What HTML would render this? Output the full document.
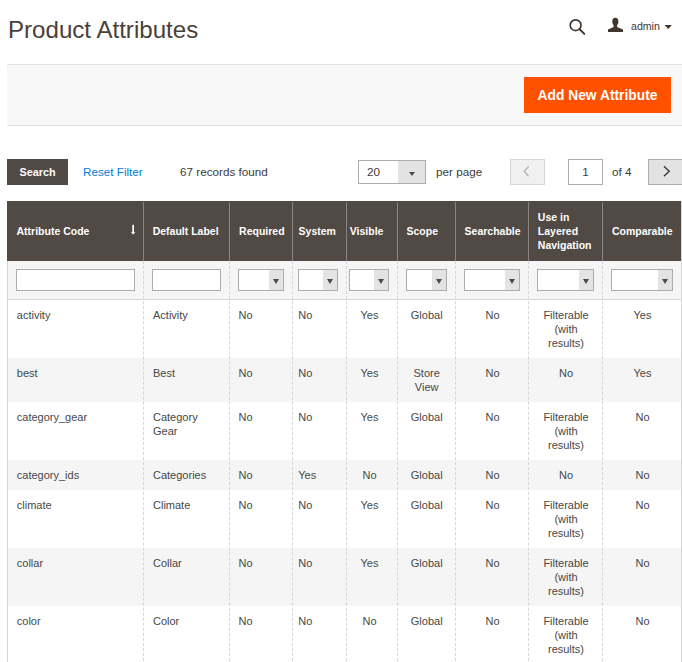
<!DOCTYPE html><html><head><meta charset="utf-8"><style>
*{margin:0;padding:0;box-sizing:border-box}
html,body{width:682px;height:662px;overflow:hidden;background:#fff}
body{font-family:"Liberation Sans",sans-serif;color:#3c3c3c;position:relative}
.a{position:absolute}
.title{left:8px;top:14px;font-size:24.1px;color:#4a403a;line-height:32px;white-space:nowrap}
.pa{left:7px;top:64px;width:675px;height:62px;background:#f8f8f8;border-top:1px solid #e3e3e3;border-bottom:1px solid #e3e3e3}
.btn-add{left:524px;top:77px;width:147px;height:36px;background:#ff5100;color:#fff;font-weight:bold;font-size:13.8px;line-height:37px;text-align:center}
.btn-search{left:7px;top:159px;width:61px;height:26px;background:#514943;color:#fff;font-weight:bold;font-size:10.8px;line-height:26px;text-align:center}
.reset{left:83px;top:164px;font-size:11.7px;color:#007bdb;line-height:16px}
.found{left:180px;top:164px;font-size:11.7px;color:#3c3c3c;line-height:16px}
.sel{left:358px;top:160px;width:68px;height:24px;border:1px solid #adadad;background:#fff}
.sel .arr{position:absolute;right:0;top:0;width:27px;height:22px;background:#e3e3e3}
.tri{position:absolute;width:0;height:0;border-left:4px solid transparent;border-right:4px solid transparent;border-top:5px solid #514943}
.pp{left:436px;top:164px;font-size:11.7px;color:#3c3c3c;line-height:16px}
.prev{left:510px;top:159px;width:35px;height:26px;background:#f0f0f0;border:1px solid #d6d6d6}
.pin{left:568px;top:159px;width:35px;height:26px;border:1px solid #adadad;background:#fff;text-align:center;font-size:11.7px;line-height:24px}
.of{left:612px;top:164px;font-size:11.7px;line-height:16px}
.next{left:648px;top:159px;width:40px;height:26px;background:#e3e3e3;border:1px solid #adadad}
.hdr{left:7px;top:201px;width:674px;height:60px;background:#514943}
.hsep{top:202px;width:1px;height:59px;background:#8a837f}
.htxt{color:#fff;font-weight:bold;font-size:10.5px;line-height:14px}
.frow{left:7px;top:261px;width:674px;height:39px;background:#f5f5f5;border-bottom:1px solid #d6d6d6}
.finput{top:269px;height:22px;border:1px solid #adadad;background:#fff}
.fsel{top:269px;height:22px;border:1px solid #adadad;background:#fff}
.fsel .arr{position:absolute;right:0;top:0;width:14px;height:20px;background:#e3e3e3}
.lborder{left:7px;top:261px;width:1px;height:410px;background:#d6d6d6}
.rborder{left:681px;top:201px;width:1px;height:470px;background:#d6d6d6}
.row{left:8px;width:673px}
.vsep{width:0;border-left:1px dashed #d6d6d6}
.cell{font-size:11px;line-height:14px;color:#474747}
</style></head><body>
<div class="a title">Product Attributes</div>
<svg class="a" style="left:566px;top:17px" width="22" height="20" viewBox="0 0 22 20"><circle cx="9.6" cy="8.2" r="5.4" fill="none" stroke="#41362f" stroke-width="1.65"/><line x1="13.4" y1="12" x2="18.3" y2="16.9" stroke="#41362f" stroke-width="1.9" stroke-linecap="round"/></svg>
<svg class="a" style="left:607px;top:17px" width="17" height="16" viewBox="0 0 17 16"><path d="M8.35 0.8 C6.3 0.8 5.3 2.2 5.3 4.3 C5.3 6.1 5.8 7.5 6.6 8.3 L6.6 10.1 L1 12.4 L1 15 L16 15 L16 12.4 L10.1 10.1 L10.1 8.3 C10.9 7.5 11.4 6.1 11.4 4.3 C11.4 2.2 10.4 0.8 8.35 0.8 Z" fill="#41362f"/></svg>
<div class="a" style="left:631px;top:19px;font-size:10.6px;line-height:14px;color:#41362f">admin</div>
<svg class="a" style="left:0;top:0" width="682" height="40" viewBox="0 0 682 40"><path d="M664.6 25 L671.9 25 L668.25 29 Z" fill="#41362f"/></svg>
<div class="a pa"></div>
<div class="a btn-add">Add New Attribute</div>
<div class="a btn-search">Search</div>
<div class="a reset">Reset Filter</div>
<div class="a found">67 records found</div>
<div class="a sel"><span class="a" style="left:8px;top:4px;font-size:11.7px;line-height:14px">20</span><div class="arr"><div class="tri" style="left:10.5px;top:11px;border-left-width:3.5px;border-right-width:3.5px;border-top-width:4.5px"></div></div></div>
<div class="a pp">per page</div>
<div class="a prev"><svg class="a" style="left:-511px;top:-160px" width="682" height="200" viewBox="0 0 682 200"><path d="M528.6 166.5 L524.2 171.4 L528.6 176.3" fill="none" stroke="#b8b2ae" stroke-width="1.4"/></svg></div>
<div class="a pin">1</div>
<div class="a of">of 4</div>
<div class="a next"><svg class="a" style="left:-649px;top:-160px" width="682" height="200" viewBox="0 0 682 200"><path d="M663.9 166.3 L669.2 171.3 L663.9 176.3" fill="none" stroke="#41362f" stroke-width="1.4"/></svg></div>
<div class="a hdr"></div>
<div class="a hsep" style="left:143px"></div>
<div class="a hsep" style="left:229px"></div>
<div class="a hsep" style="left:292px"></div>
<div class="a hsep" style="left:346px"></div>
<div class="a hsep" style="left:397px"></div>
<div class="a hsep" style="left:455px"></div>
<div class="a hsep" style="left:528px"></div>
<div class="a hsep" style="left:602px"></div>
<div class="a htxt" style="left:16.5px;top:224.1px">Attribute Code</div>
<div class="a htxt" style="left:152.7px;top:224.1px">Default Label</div>
<div class="a htxt" style="left:239.1px;top:224.1px">Required</div>
<div class="a htxt" style="left:298.6px;top:224.1px">System</div>
<div class="a htxt" style="left:349.8px;top:224.1px">Visible</div>
<div class="a htxt" style="left:406.5px;top:224.1px">Scope</div>
<div class="a htxt" style="left:464.6px;top:224.1px">Searchable</div>
<div class="a htxt" style="left:537.8px;top:210.1px">Use in<br>Layered<br>Navigation</div>
<div class="a htxt" style="left:611.9px;top:224.1px">Comparable</div>
<svg class="a" style="left:128px;top:222px" width="10" height="15" viewBox="128 222 10 15"><rect x="132.3" y="224.8" width="1.7" height="8" fill="#fff"/><path d="M130.8 232.3 L135.4 232.3 L133.15 234.6 Z" fill="#fff"/></svg>
<div class="a frow"></div>
<div class="a finput" style="left:16px;width:119px"></div>
<div class="a finput" style="left:152px;width:69px"></div>
<div class="a fsel" style="left:238px;width:46px"><div class="arr"><div class="tri" style="left:3.5px;top:8.5px;border-left-width:3.6px;border-right-width:3.6px;border-top-width:5px"></div></div></div>
<div class="a fsel" style="left:298px;width:40px"><div class="arr"><div class="tri" style="left:3.5px;top:8.5px;border-left-width:3.6px;border-right-width:3.6px;border-top-width:5px"></div></div></div>
<div class="a fsel" style="left:349px;width:40px"><div class="arr"><div class="tri" style="left:3.5px;top:8.5px;border-left-width:3.6px;border-right-width:3.6px;border-top-width:5px"></div></div></div>
<div class="a fsel" style="left:406px;width:41px"><div class="arr"><div class="tri" style="left:3.5px;top:8.5px;border-left-width:3.6px;border-right-width:3.6px;border-top-width:5px"></div></div></div>
<div class="a fsel" style="left:464px;width:56px"><div class="arr"><div class="tri" style="left:3.5px;top:8.5px;border-left-width:3.6px;border-right-width:3.6px;border-top-width:5px"></div></div></div>
<div class="a fsel" style="left:537px;width:57px"><div class="arr"><div class="tri" style="left:3.5px;top:8.5px;border-left-width:3.6px;border-right-width:3.6px;border-top-width:5px"></div></div></div>
<div class="a fsel" style="left:611px;width:62px"><div class="arr"><div class="tri" style="left:3.5px;top:8.5px;border-left-width:3.6px;border-right-width:3.6px;border-top-width:5px"></div></div></div>
<div class="a row" style="top:300px;height:58px;background:#fff"></div>
<div class="a cell" style="left:16.8px;top:308px">activity</div>
<div class="a cell" style="left:153px;top:308px">Activity</div>
<div class="a cell" style="left:238.5px;top:308px">No</div>
<div class="a cell" style="left:298.3px;top:308px">No</div>
<div class="a cell" style="left:344px;width:51px;top:308px;text-align:center">Yes</div>
<div class="a cell" style="left:397.7px;width:58px;top:308px;text-align:center">Global</div>
<div class="a cell" style="left:456px;width:73px;top:308px;text-align:center">No</div>
<div class="a cell" style="left:529px;width:74px;top:308px;text-align:center">Filterable<br>(with<br>results)</div>
<div class="a cell" style="left:602.5px;width:80px;top:308px;text-align:center">Yes</div>
<div class="a row" style="top:358px;height:44px;background:#f5f5f5"></div>
<div class="a cell" style="left:16.8px;top:366px">best</div>
<div class="a cell" style="left:153px;top:366px">Best</div>
<div class="a cell" style="left:238.5px;top:366px">No</div>
<div class="a cell" style="left:298.3px;top:366px">No</div>
<div class="a cell" style="left:344px;width:51px;top:366px;text-align:center">Yes</div>
<div class="a cell" style="left:397.7px;width:58px;top:366px;text-align:center">Store<br>View</div>
<div class="a cell" style="left:456px;width:73px;top:366px;text-align:center">No</div>
<div class="a cell" style="left:529px;width:74px;top:366px;text-align:center">No</div>
<div class="a cell" style="left:602.5px;width:80px;top:366px;text-align:center">Yes</div>
<div class="a row" style="top:402px;height:58px;background:#fff"></div>
<div class="a cell" style="left:16.8px;top:410px">category_gear</div>
<div class="a cell" style="left:153px;top:410px">Category<br>Gear</div>
<div class="a cell" style="left:238.5px;top:410px">No</div>
<div class="a cell" style="left:298.3px;top:410px">No</div>
<div class="a cell" style="left:344px;width:51px;top:410px;text-align:center">Yes</div>
<div class="a cell" style="left:397.7px;width:58px;top:410px;text-align:center">Global</div>
<div class="a cell" style="left:456px;width:73px;top:410px;text-align:center">No</div>
<div class="a cell" style="left:529px;width:74px;top:410px;text-align:center">Filterable<br>(with<br>results)</div>
<div class="a cell" style="left:602.5px;width:80px;top:410px;text-align:center">No</div>
<div class="a row" style="top:460px;height:30px;background:#f5f5f5"></div>
<div class="a cell" style="left:16.8px;top:468px">category_ids</div>
<div class="a cell" style="left:153px;top:468px">Categories</div>
<div class="a cell" style="left:238.5px;top:468px">No</div>
<div class="a cell" style="left:298.3px;top:468px">Yes</div>
<div class="a cell" style="left:344px;width:51px;top:468px;text-align:center">No</div>
<div class="a cell" style="left:397.7px;width:58px;top:468px;text-align:center">Global</div>
<div class="a cell" style="left:456px;width:73px;top:468px;text-align:center">No</div>
<div class="a cell" style="left:529px;width:74px;top:468px;text-align:center">No</div>
<div class="a cell" style="left:602.5px;width:80px;top:468px;text-align:center">No</div>
<div class="a row" style="top:490px;height:58px;background:#fff"></div>
<div class="a cell" style="left:16.8px;top:498px">climate</div>
<div class="a cell" style="left:153px;top:498px">Climate</div>
<div class="a cell" style="left:238.5px;top:498px">No</div>
<div class="a cell" style="left:298.3px;top:498px">No</div>
<div class="a cell" style="left:344px;width:51px;top:498px;text-align:center">Yes</div>
<div class="a cell" style="left:397.7px;width:58px;top:498px;text-align:center">Global</div>
<div class="a cell" style="left:456px;width:73px;top:498px;text-align:center">No</div>
<div class="a cell" style="left:529px;width:74px;top:498px;text-align:center">Filterable<br>(with<br>results)</div>
<div class="a cell" style="left:602.5px;width:80px;top:498px;text-align:center">No</div>
<div class="a row" style="top:548px;height:58px;background:#f5f5f5"></div>
<div class="a cell" style="left:16.8px;top:556px">collar</div>
<div class="a cell" style="left:153px;top:556px">Collar</div>
<div class="a cell" style="left:238.5px;top:556px">No</div>
<div class="a cell" style="left:298.3px;top:556px">No</div>
<div class="a cell" style="left:344px;width:51px;top:556px;text-align:center">Yes</div>
<div class="a cell" style="left:397.7px;width:58px;top:556px;text-align:center">Global</div>
<div class="a cell" style="left:456px;width:73px;top:556px;text-align:center">No</div>
<div class="a cell" style="left:529px;width:74px;top:556px;text-align:center">Filterable<br>(with<br>results)</div>
<div class="a cell" style="left:602.5px;width:80px;top:556px;text-align:center">No</div>
<div class="a row" style="top:606px;height:58px;background:#fff"></div>
<div class="a cell" style="left:16.8px;top:614px">color</div>
<div class="a cell" style="left:153px;top:614px">Color</div>
<div class="a cell" style="left:238.5px;top:614px">No</div>
<div class="a cell" style="left:298.3px;top:614px">No</div>
<div class="a cell" style="left:344px;width:51px;top:614px;text-align:center">No</div>
<div class="a cell" style="left:397.7px;width:58px;top:614px;text-align:center">Global</div>
<div class="a cell" style="left:456px;width:73px;top:614px;text-align:center">No</div>
<div class="a cell" style="left:529px;width:74px;top:614px;text-align:center">Filterable<br>(with<br>results)</div>
<div class="a cell" style="left:602.5px;width:80px;top:614px;text-align:center">No</div>
<div class="a vsep" style="left:143px;top:261px;height:410px"></div>
<div class="a vsep" style="left:229px;top:261px;height:410px"></div>
<div class="a vsep" style="left:292px;top:261px;height:410px"></div>
<div class="a vsep" style="left:346px;top:261px;height:410px"></div>
<div class="a vsep" style="left:397px;top:261px;height:410px"></div>
<div class="a vsep" style="left:455px;top:261px;height:410px"></div>
<div class="a vsep" style="left:528px;top:261px;height:410px"></div>
<div class="a vsep" style="left:602px;top:261px;height:410px"></div>
<div class="a lborder"></div>
<div class="a rborder"></div>
</body></html>
